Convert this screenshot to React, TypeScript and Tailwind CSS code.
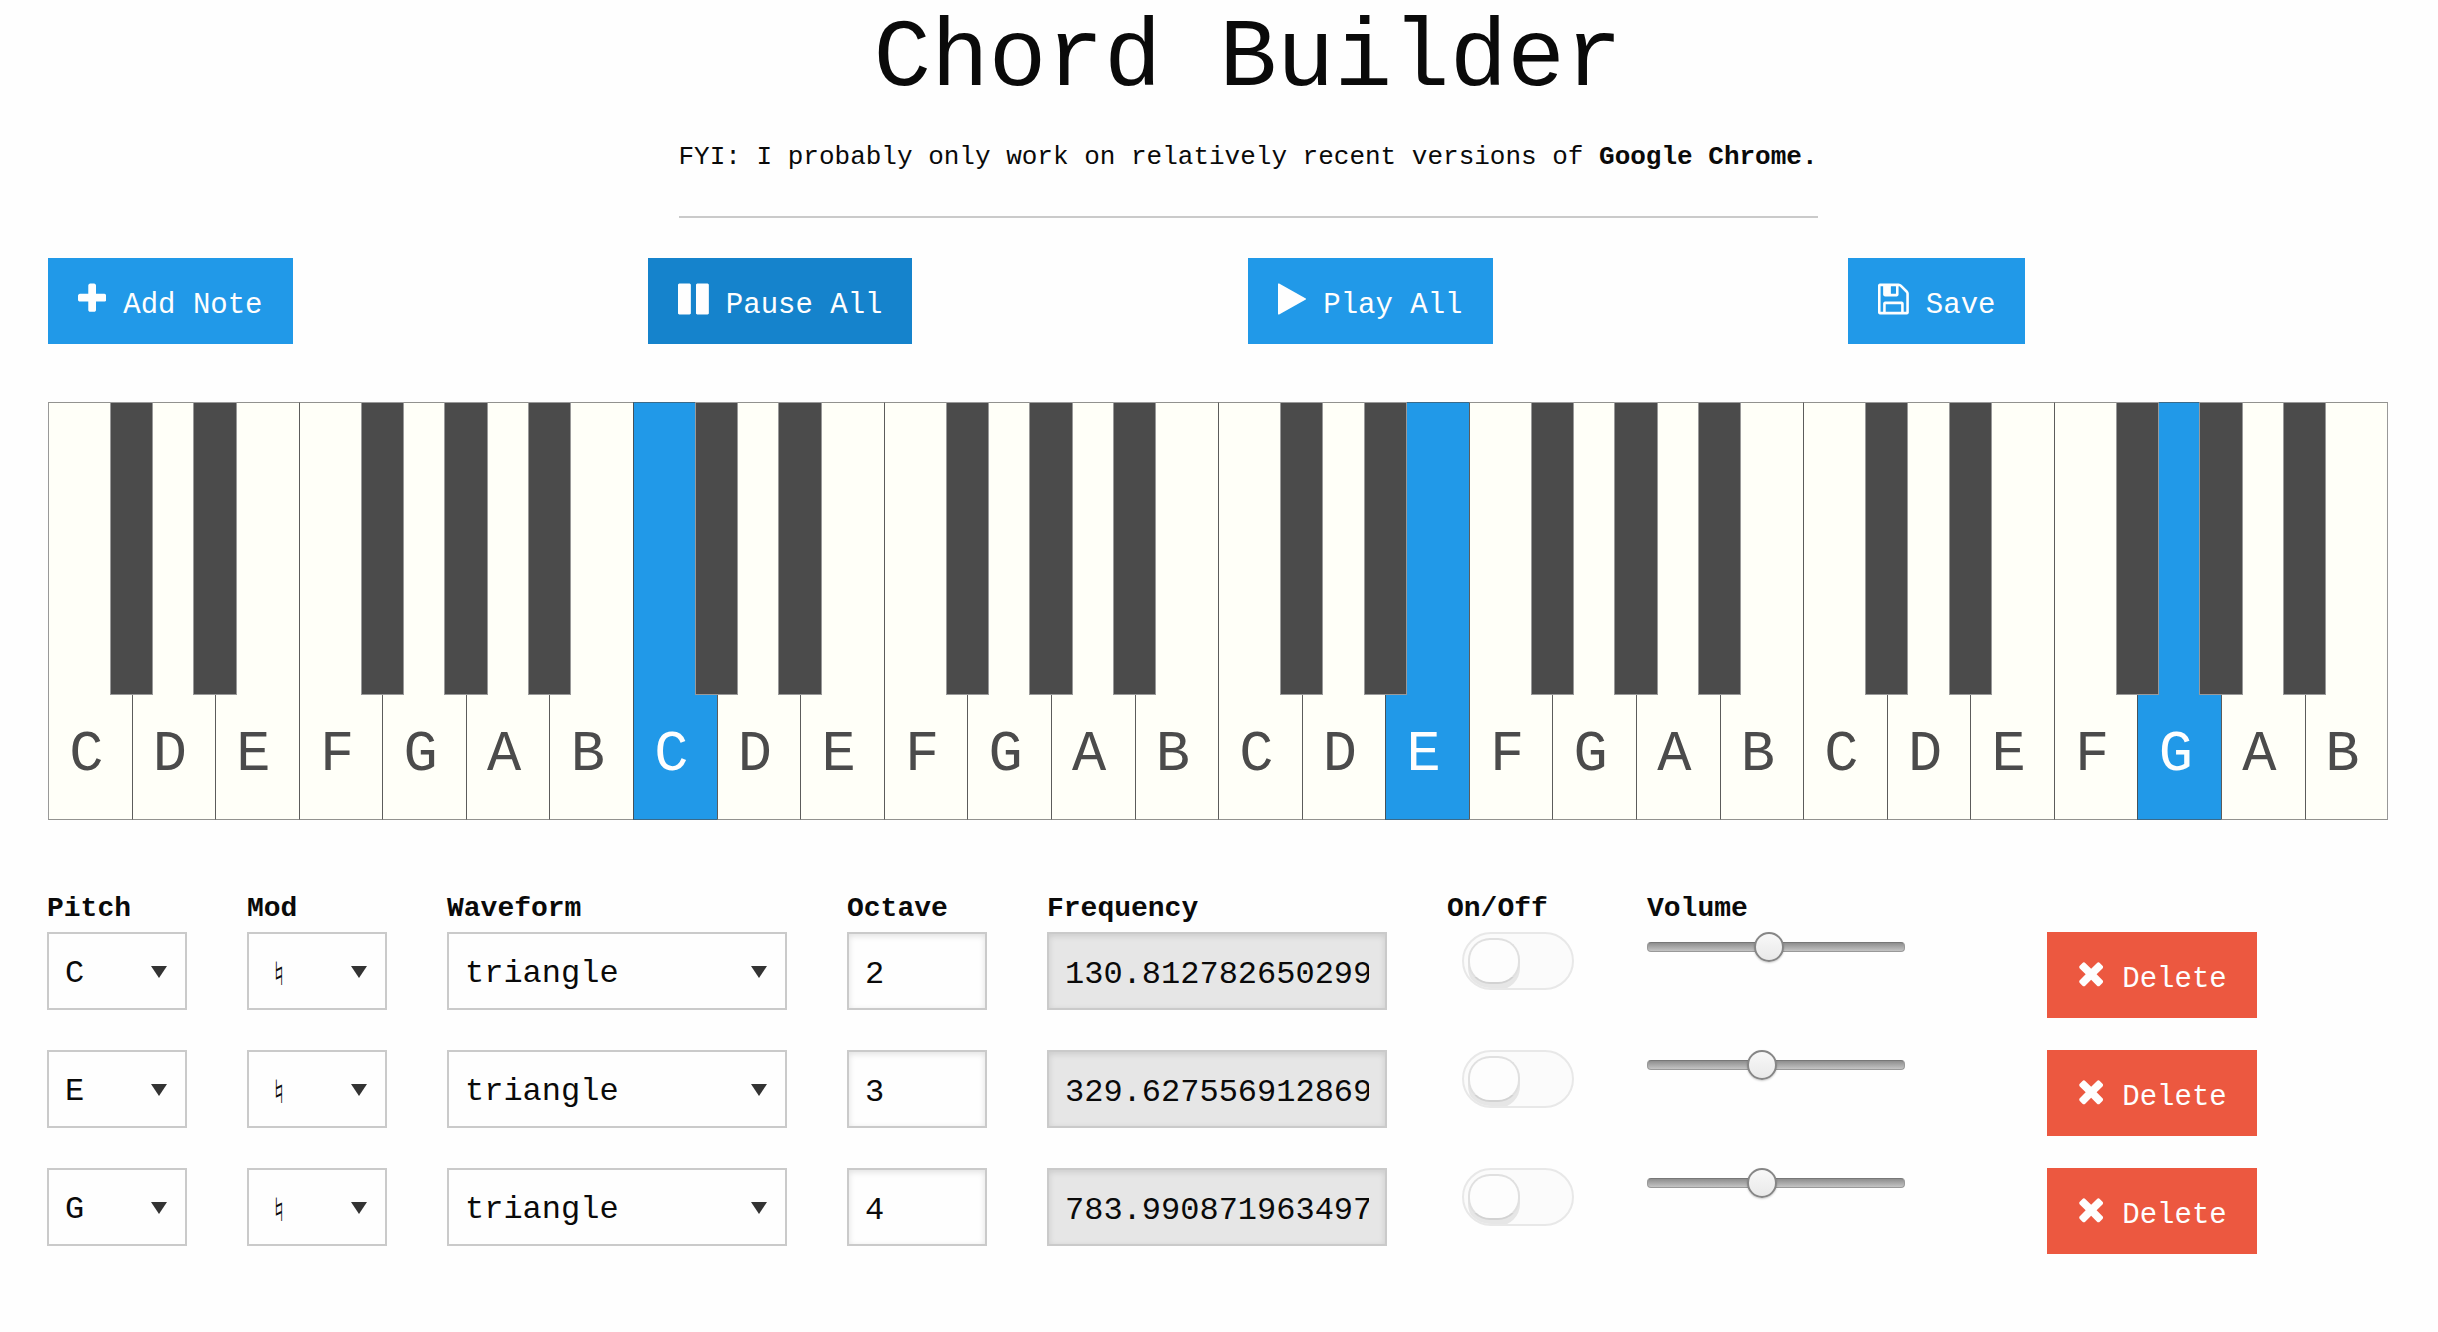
import { useState } from "react";

const BLUE_KEYS = [7, 16, 25];
const NAMES = ["C", "D", "E", "F", "G", "A", "B"];
const HAS_SHARP = ["C", "D", "F", "G", "A"];

const ICONS = {
  plus: {
    box: "192 0 1408 1792",
    d: "M1600 736v192q0 40-28 68t-68 28h-416v416q0 40-28 68t-68 28h-192q-40 0-68-28t-28-68v-416h-416q-40 0-68-28t-28-68v-192q0-40 28-68t68-28h416v-416q0-40 28-68t68-28h192q40 0 68 28t28 68v416h416q40 0 68 28t28 68z",
  },
  pause: {
    box: "128 0 1536 1792",
    d: "M1664 192v1408q0 26-19 45t-45 19h-512q-26 0-45-19t-19-45v-1408q0-26 19-45t45-19h512q26 0 45 19t19 45zm-896 0v1408q0 26-19 45t-45 19h-512q-26 0-45-19t-19-45v-1408q0-26 19-45t45-19h512q26 0 45 19t19 45z",
  },
  play: {
    box: "192 0 1408 1792",
    d: "M1576 927l-1328 738q-23 13-39.5 3t-16.500-36v-1472q0-26 16.500-36t39.500 3l1328 738q23 13 23 31t-23 31z",
  },
  save: {
    box: "128 0 1536 1792",
    d: "M512 1536h768v-384h-768v384zm896 0h128v-896q0-14-10-38.500t-20-34.500l-281-281q-10-10-34-20t-39-10v416q0 40-28 68t-68 28h-576q-40 0-68-28t-28-68v-416h-128v1280h128v-416q0-40 28-68t68-28h832q40 0 68 28t28 68v416zm-384-928v-320q0-13-9.500-22.500t-22.500-9.500h-192q-13 0-22.500 9.500t-9.500 22.500v320q0 13 9.500 22.500t22.500 9.500h192q13 0 22.500-9.500t9.500-22.500zm640 32v928q0 40-28 68t-68 28h-1344q-40 0-68-28t-28-68v-1344q0-40 28-68t68-28h928q40 0 88 20t76 48l280 280q28 28 48 76t20 88z",
  },
  times: {
    box: "192 0 1408 1792",
    d: "M1490 1322q0 40-28 68l-136 136q-28 28-68 28t-68-28l-294-294-294 294q-28 28-68 28t-68-28l-136-136q-28-28-28-68t28-68l294-294-294-294q-28-28-28-68t28-68l136-136q28-28 68-28t68 28l294 294 294-294q28-28 68-28t68 28l136 136q28 28 28 68t-28 68l-294 294 294 294q28 28 28 68z",
  },
};

function ActionButton({ icon, label, tone }: { icon: keyof typeof ICONS; label: string; tone: string }) {
  return (
    <button
      type="button"
      className={`flex items-start gap-[17px] px-[30px] pt-[23px] pb-[13px] text-[29px] leading-[50px] whitespace-nowrap text-[#fefefe] ${tone}`}
    >
      <svg viewBox={ICONS[icon].box} className="h-9 w-auto shrink-0 fill-current" aria-hidden="true">
        <path d={ICONS[icon].d} />
      </svg>
      {label}
    </button>
  );
}

function Piano() {
  return (
    <div className="flex h-[418px]">
      {Array.from({ length: 28 }, (_, i) => {
        const name = NAMES[i % 7];
        const active = BLUE_KEYS.includes(i);
        return (
          <div key={i} className="relative flex flex-1">
            <button
              type="button"
              className={`flex flex-1 items-end justify-center border-y border-l border-y-[#4b4b4b]/60 pr-2 pb-8 text-[57px] leading-[64px] ${
                i === 0 ? "border-l-[#999999]" : "border-l-[#4b4b4b]/90"
              } ${i === 27 ? "border-r border-r-[#999999]" : ""} ${
                active ? "bg-[#2199e8] text-[#fefefe]" : "bg-[#fffff8] text-[#4b4b4b]"
              }`}
            >
              {name}
            </button>
            {HAS_SHARP.includes(name) && (
              <button
                type="button"
                aria-label={`${name} sharp`}
                className="absolute top-0 left-[74%] z-10 h-[293px] w-[52%] border border-[#999999] bg-[#4b4b4b]"
              />
            )}
          </div>
        );
      })}
    </div>
  );
}

function Select({ label, value, options, pad }: { label: string; value: string; options: string[]; pad: string }) {
  return (
    <div className="relative">
      <select
        aria-label={label}
        defaultValue={value}
        className={`block h-[78px] w-full appearance-none border-2 border-[#cacaca] bg-[#fefefe] pt-1.5 text-[32px] ${pad}`}
      >
        {options.map((o) => (
          <option key={o}>{o}</option>
        ))}
      </select>
      <svg
        viewBox="0 0 16 12"
        className="pointer-events-none absolute top-[34px] right-5 h-3 w-4 fill-[#333333]"
        aria-hidden="true"
      >
        <path d="M0 0h16L8 12z" />
      </svg>
    </div>
  );
}

const FIELD =
  "block h-[78px] w-full min-w-0 border-2 border-[#cacaca] px-4 pt-1.5 text-[32px] shadow-[inset_0_2px_6px_rgba(10,10,10,0.12)]";

function NoteRow({ pitch, octave, freq, volume }: { pitch: string; octave: number; freq: string; volume: number }) {
  const [level, setLevel] = useState(volume);
  return (
    <div className="grid grid-cols-12 items-start gap-x-[60px]">
      <Select label={`Pitch ${pitch}`} value={pitch} options={NAMES} pad="pl-4" />
      <Select label={`Mod ${pitch}`} value="♮" options={["♮", "♯", "♭"]} pad="pl-6 font-['DejaVu_Sans',sans-serif]" />
      <div className="col-span-2">
        <Select label={`Waveform ${pitch}`} value="triangle" options={["triangle", "sine", "square", "sawtooth"]} pad="pl-4" />
      </div>
      <input aria-label={`Octave ${pitch}`} defaultValue={octave} className={`${FIELD} bg-[#fefefe]`} />
      <input aria-label={`Frequency ${pitch}`} readOnly value={freq} className={`${FIELD} col-span-2 bg-[#e6e6e6]`} />
      <label className="relative ml-[15px] flex h-[58px] w-28 items-start overflow-hidden rounded-full border-2 border-[#e8e8e8] bg-[#fbfbfb] px-1 pt-1">
        <input type="checkbox" role="switch" aria-label={`On/Off ${pitch}`} className="peer sr-only" />
        <span className="h-[46px] w-[52px] rounded-[22px] border-2 border-[#e0e0e0] border-b-[#d2d2d2] bg-[#fdfdfd] shadow-[0_6px_0_#e6e6e6] peer-checked:translate-x-12" />
      </label>
      <input
        type="range"
        min={0}
        max={100}
        value={level}
        onChange={(e) => setLevel(Number(e.target.value))}
        aria-label={`Volume ${pitch}`}
        className="col-span-2 h-[30px] w-[258px] max-w-full appearance-none bg-transparent [&::-webkit-slider-runnable-track]:h-2.5 [&::-webkit-slider-runnable-track]:rounded-[4px] [&::-webkit-slider-runnable-track]:border [&::-webkit-slider-runnable-track]:border-[#999999] [&::-webkit-slider-runnable-track]:border-t-[#777777] [&::-webkit-slider-runnable-track]:bg-linear-to-b [&::-webkit-slider-runnable-track]:from-[#8e8e8e] [&::-webkit-slider-runnable-track]:to-[#c4c4c4] [&::-webkit-slider-thumb]:-mt-[11px] [&::-webkit-slider-thumb]:size-[30px] [&::-webkit-slider-thumb]:appearance-none [&::-webkit-slider-thumb]:rounded-full [&::-webkit-slider-thumb]:border-2 [&::-webkit-slider-thumb]:border-[#868686] [&::-webkit-slider-thumb]:bg-linear-to-b [&::-webkit-slider-thumb]:from-[#f8f8f8] [&::-webkit-slider-thumb]:to-[#e9e9e9] [&::-webkit-slider-thumb]:shadow-[0_1px_2px_rgba(0,0,0,0.2)]"
      />
      <div className="col-span-2 flex">
        <ActionButton icon="times" label="Delete" tone="bg-[#ec5840]" />
      </div>
    </div>
  );
}

export default function App() {
  return (
    <div className="min-h-screen bg-[#fefefe] pr-[50px] pl-12 font-['Liberation_Mono','DejaVu_Sans_Mono',monospace] text-[#0a0a0a]">
      <header className="flex flex-col items-center pt-1 pl-15">
        <h1 className="text-[96px] leading-[112px]">Chord Builder</h1>
        <div className="border-b-2 border-[#cacaca] pt-5 pb-[38px] text-[26px] leading-[42px]">
          FYI: I probably only work on relatively recent versions of <strong>Google Chrome.</strong>
        </div>
      </header>

      <div className="mt-10 grid grid-cols-4 justify-items-start gap-x-[60px]">
        <ActionButton icon="plus" label="Add Note" tone="bg-[#2199e8]" />
        <ActionButton icon="pause" label="Pause All" tone="bg-[#1583cc]" />
        <ActionButton icon="play" label="Play All" tone="bg-[#2199e8]" />
        <ActionButton icon="save" label="Save" tone="bg-[#2199e8]" />
      </div>

      <div className="mt-[58px]">
        <Piano />
      </div>

      <section className="mt-[66px] -ml-px flex flex-col gap-8 pr-px">
        <div>
          <div className="grid grid-cols-12 gap-x-[60px] text-[28px] leading-[46px] font-bold">
            <span>Pitch</span>
            <span>Mod</span>
            <span className="col-span-2">Waveform</span>
            <span>Octave</span>
            <span className="col-span-2">Frequency</span>
            <span>On/Off</span>
            <span>Volume</span>
          </div>
          <NoteRow pitch="C" octave={2} freq="130.812782650299" volume={47} />
        </div>
        <NoteRow pitch="E" octave={3} freq="329.627556912869" volume={44} />
        <NoteRow pitch="G" octave={4} freq="783.990871963497" volume={44} />
      </section>
    </div>
  );
}
